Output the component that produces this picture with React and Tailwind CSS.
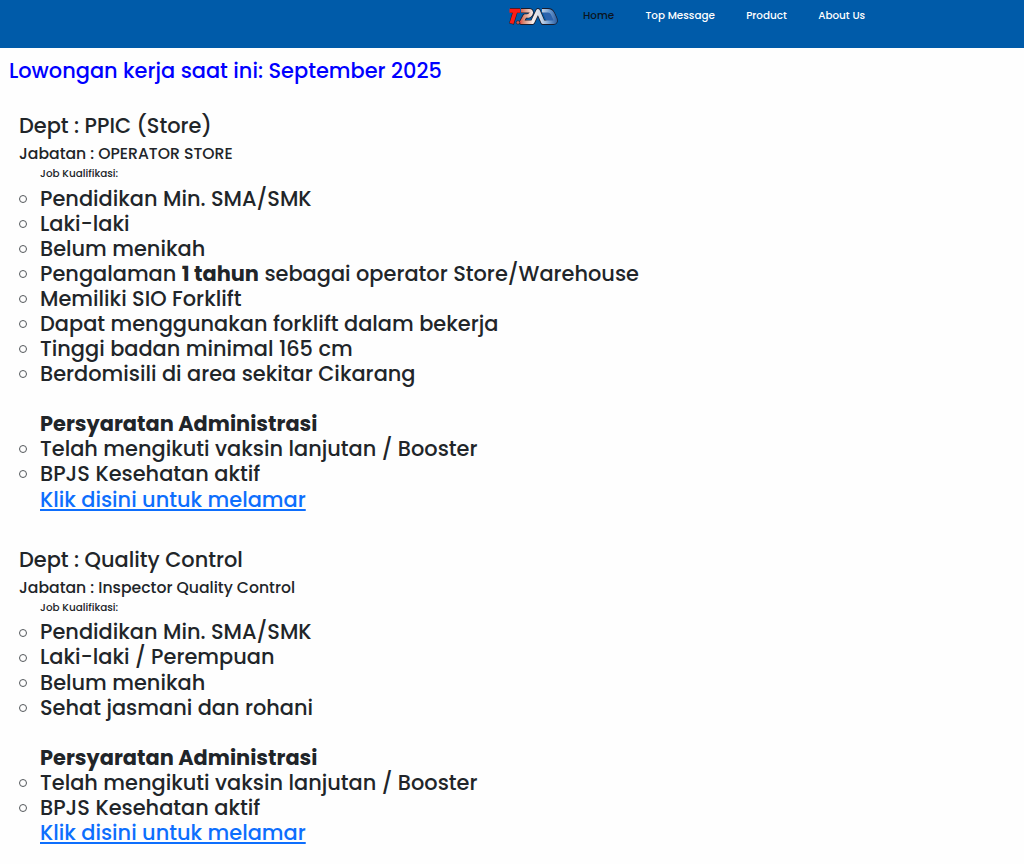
const menu = [
  { label: 'Home', style: 'text-[#0b1420]' },
  { label: 'Top Message', style: 'text-white' },
  { label: 'Product', style: 'text-white' },
  { label: 'About Us', style: 'text-white' },
];

const jobs = [
  {
    dept: 'Dept : PPIC (Store)',
    jabatan: 'Jabatan : OPERATOR STORE',
    kualifikasi: [
      'Pendidikan Min. SMA/SMK',
      'Laki-laki',
      'Belum menikah',
      <>
        Pengalaman <strong className="font-bold">1 tahun</strong> sebagai operator Store/Warehouse
      </>,
      'Memiliki SIO Forklift',
      'Dapat menggunakan forklift dalam bekerja',
      'Tinggi badan minimal 165 cm',
      'Berdomisili di area sekitar Cikarang',
    ],
  },
  {
    dept: 'Dept : Quality Control',
    jabatan: 'Jabatan : Inspector Quality Control',
    kualifikasi: [
      'Pendidikan Min. SMA/SMK',
      'Laki-laki / Perempuan',
      'Belum menikah',
      'Sehat jasmani dan rohani',
    ],
  },
];

const administrasi = ['Telah mengikuti vaksin lanjutan / Booster', 'BPJS Kesehatan aktif'];

const Logo = () => (
  <svg className="h-[19px] w-[52px]" viewBox="0 0 52 19" fill="none">
    <defs>
      <linearGradient id="logoFill" gradientUnits="userSpaceOnUse" x1="0" y1="0" x2="52" y2="0">
        <stop offset="0.2" stopColor="#f0201c" />
        <stop offset="0.32" stopColor="#d98872" />
        <stop offset="0.5" stopColor="#f7efec" />
        <stop offset="0.66" stopColor="#c9d6e8" />
        <stop offset="0.82" stopColor="#6d9bd0" />
        <stop offset="1" stopColor="#1c4f96" />
      </linearGradient>
    </defs>
    <g strokeLinejoin="round">
      <g stroke="#1a1c2c" strokeWidth="5">
        <path d="M3 3.500H13M8.500 3.500L4.500 17" />
        <path d="M14 3.500H22Q25 3.500 24 6.500Q23 9 20 9H18L14.500 15.500H25.500L31 3.500L36 15.500H46.500Q49 15.500 48 12L45.500 6.500Q44 3.500 41 3.500H35" />
      </g>
      <path d="M35 4L40 15H48L44 4Z" fill="#2c63ad" />
      <path d="M2.500 3.800H13M8.500 3.800L4.500 16.500" stroke="#fb1c16" strokeWidth="4" />
      <path
        d="M14 3.800H22Q25 3.800 24 6.500Q23 9 20 9H18L14.500 15.300H25.500L31 3.800L36 15.300H46.500Q49 15.300 48 12L45.500 6.500Q44 3.800 41 3.800H35"
        stroke="url(#logoFill)"
        strokeWidth="3.6"
      />
      <circle cx="11" cy="15.500" r="1.800" fill="#d9564a" stroke="#1a1c2c" strokeWidth="0.600" />
    </g>
  </svg>
);

const Item = ({ children }) => (
  <li className="flex h-[25.05px] items-center">
    <span className="mt-[1px] mr-[13px] size-2 shrink-0 rounded-full border border-[#54585c]" />
    <span>{children}</span>
  </li>
);

const Job = ({ job }) => (
  <section className="mb-[34px] pl-[19px]">
    <h4 className="h-[28px] leading-[28px]">{job.dept}</h4>
    <h5 className="mt-[4px] h-[20px] text-[15.67px] leading-[20px]">{job.jabatan}</h5>
    <div className="pl-[21px] text-[10.43px] leading-[20px]">Job Kualifikasi:</div>
    <ul className="mt-[2px]">
      {job.kualifikasi.map((item, i) => (
        <Item key={i}>{item}</Item>
      ))}
    </ul>
    <div className="mt-[25px] h-[25.05px] pl-[21px] leading-[25px] font-bold">Persyaratan Administrasi</div>
    <ul>
      {administrasi.map((item) => (
        <Item key={item}>{item}</Item>
      ))}
    </ul>
    <div className="h-[25.05px] pl-[21px] leading-[25px]">
      <a href="#" className="text-[#0d6efd] underline">
        Klik disini untuk melamar
      </a>
    </div>
  </section>
);

export default function App() {
  return (
    <div className="h-screen overflow-hidden bg-[#fefefe] font-['Poppins',sans-serif] text-[20.9px] font-medium text-[#212529]">
      <nav className="flex h-12 items-start bg-[#005ba9] pt-[7px] pl-[507px]">
        <Logo />
        <div className="mt-px ml-[24px] flex gap-[31.3px] text-[10.4px] leading-4">
          {menu.map((item) => (
            <a key={item.label} href="#" className={item.style}>
              {item.label}
            </a>
          ))}
        </div>
      </nav>
      <main>
        <h4 className="mb-[28px] pt-[9px] pl-[9px] leading-[27px] text-[#0000ff]">
          Lowongan kerja saat ini: September 2025
        </h4>
        {jobs.map((job) => (
          <Job key={job.dept} job={job} />
        ))}
      </main>
    </div>
  );
}
